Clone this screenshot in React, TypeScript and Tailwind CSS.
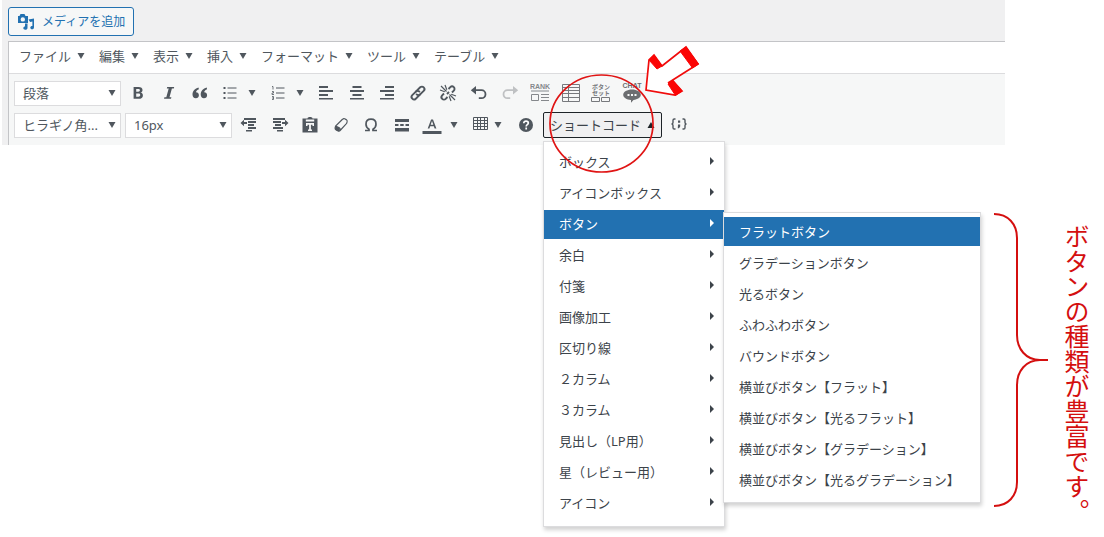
import type { ReactNode } from 'react';

const menus = ['ファイル', '編集', '表示', '挿入', 'フォーマット', 'ツール', 'テーブル'];

const shortcodes = [
  'ボックス',
  'アイコンボックス',
  'ボタン',
  '余白',
  '付箋',
  '画像加工',
  '区切り線',
  '２カラム',
  '３カラム',
  '見出し（LP用）',
  '星（レビュー用）',
  'アイコン',
];

const buttonTypes = [
  'フラットボタン',
  'グラデーションボタン',
  '光るボタン',
  'ふわふわボタン',
  'バウンドボタン',
  '横並びボタン【フラット】',
  '横並びボタン【光るフラット】',
  '横並びボタン【グラデーション】',
  '横並びボタン【光るグラデーション】',
];

function Icon({ children, className = '' }: { children: ReactNode; className?: string }) {
  return (
    <svg viewBox="0 0 20 20" className={`size-5 shrink-0 ${className}`} fill="currentColor" aria-hidden="true">
      {children}
    </svg>
  );
}

function Caret({ up = false }: { up?: boolean }) {
  return (
    <svg viewBox="0 0 8 6" className="h-1.5 w-2 shrink-0" fill="currentColor" aria-hidden="true">
      <path d={up ? 'M.5 6h7L4 0z' : 'M.5 0h7L4 6z'} />
    </svg>
  );
}

function Tool({ label, children }: { label: string; children: ReactNode }) {
  return (
    <button type="button" aria-label={label} className="flex h-7 items-center justify-center">
      {children}
    </button>
  );
}

function SplitTool({ label, className, children }: { label: string; className: string; children: ReactNode }) {
  return (
    <button type="button" aria-label={label} className={`flex h-7 items-center pl-[5px] ${className}`}>
      {children}
      <Caret />
    </button>
  );
}

function Picker({ label, value }: { label: string; value: string }) {
  return (
    <div className="relative w-[107px]">
      <select
        aria-label={label}
        className="block h-[25px] w-full appearance-none border border-[#dcdcde] bg-white pl-2 text-[13px] leading-5 text-[#50575e]"
      >
        <option>{value}</option>
      </select>
      <span className="pointer-events-none absolute inset-y-0 right-[5px] flex items-center">
        <Caret />
      </span>
    </div>
  );
}

const stroke = { fill: 'none', stroke: 'currentColor' };

function FirstRow() {
  return (
    <div className="flex h-8 items-center">
      <Picker label="段落" value="段落" />
      <div className="ml-0.5 grid w-[92px] grid-cols-3">
        <Tool label="太字">
          <Icon>
            <path d="M5.600 4h4.900c2.600 0 4 1 4 2.900 0 1.400-.7 2.300-2 2.700 1.600.3 2.400 1.300 2.400 2.800 0 2.200-1.600 3.400-4.300 3.400h-5zm2.600 2v2.700h2c1.100 0 1.700-.5 1.700-1.400S11.300 6 10.200 6zm0 4.600v3.100h2.200c1.200 0 1.800-.5 1.800-1.600s-.7-1.500-1.900-1.500z" />
          </Icon>
        </Tool>
        <Tool label="斜体">
          <Icon>
            <path d="M8.200 4h7l-.4 1.500h-1.900L10.500 14.300h1.900L12 15.800H5l.4-1.500h1.900L9.700 5.500H7.800z" />
          </Icon>
        </Tool>
        <Tool label="引用">
          <Icon>
            <path d="M8.500 4.500C5 5.300 2.500 8 2.500 11.600c0 2.300 1.300 3.700 3.300 3.700 1.800 0 3.100-1.300 3.100-3.100S7.700 9.200 6 9.200c.2-1.200 1.200-2.200 2.900-2.900zM16.700 4.500c-3.500.8-6 3.500-6 7.100 0 2.300 1.300 3.700 3.300 3.700 1.800 0 3.100-1.300 3.100-3.100s-1.200-3-2.900-3c.2-1.200 1.200-2.200 2.900-2.900z" />
          </Icon>
        </Tool>
      </div>
      <SplitTool label="番号なしリスト" className="w-12 gap-2">
        <Icon>
          <path d="M3.500 4h2v2h-2zM3.500 9h2v2h-2zM3.500 14h2v2h-2z" />
          <path d="M7.500 5h9M7.500 10h9M7.500 15h9" {...stroke} />
        </Icon>
      </SplitTool>
      <SplitTool label="番号付きリスト" className="w-12 gap-2">
        <Icon>
          <path d="M4 3.500h1v3M4 8.500h1.500v1.500H4v1.500h2M4 13.500h1.500v3H4M4 15h1.500" {...stroke} strokeWidth=".8" />
          <path d="M8 5h8.500M8 10h8.500M8 15h8.500" {...stroke} />
        </Icon>
      </SplitTool>
      <div className="grid w-[336px] grid-cols-11">
        <Tool label="左寄せ">
          <Icon><path d="M3 3h9v2H3zM3 7h14v2H3zM3 11h9v2H3zM3 15h14v1.500H3z" /></Icon>
        </Tool>
        <Tool label="中央揃え">
          <Icon><path d="M5.500 3h9v2h-9zM3 7h14v2H3zM5.500 11h9v2h-9zM3 15h14v1.500H3z" /></Icon>
        </Tool>
        <Tool label="右寄せ">
          <Icon><path d="M8 3h9v2H8zM3 7h14v2H3zM8 11h9v2H8zM3 15h14v1.500H3z" /></Icon>
        </Tool>
        <Tool label="リンクの挿入">
          <Icon>
            <g {...stroke} strokeWidth="1.900" strokeLinecap="round">
              <path d="m7.800 8.600 4.400-4.300a2.400 2.400 0 0 1 3.500 3.500l-3.600 3.600a2.400 2.400 0 0 1-3.500 0" />
              <path d="m12.200 11.400-4.400 4.300a2.400 2.400 0 0 1-3.500-3.500l3.600-3.600a2.400 2.400 0 0 1 3.500 0" />
            </g>
          </Icon>
        </Tool>
        <Tool label="リンクの削除">
          <Icon>
            <g {...stroke} strokeWidth="1.900">
              <path d="m10.500 6 1.800-1.800a2.400 2.400 0 0 1 3.500 3.500L14 9.500" />
              <path d="m9.500 14-1.800 1.800a2.400 2.400 0 0 1-3.500-3.500L6 10.500M9 11l2-2" />
            </g>
            <path d="m3 3 5.500 5.500M7 2l1.800 4.800M2 7l4.800 1.800M17 17l-5.500-5.500M13 18l-1.800-4.800M18 13l-4.800-1.800" {...stroke} strokeWidth="1.200" />
          </Icon>
        </Tool>
        <Tool label="取り消し">
          <Icon>
            <path d="M1.800 7.200 7 3v8.400z" />
            <path d="M6 7.200h6.500a4 4 0 0 1 0 8H9.800" {...stroke} strokeWidth="1.800" />
          </Icon>
        </Tool>
        <Tool label="やり直し">
          <Icon className="text-[#bfc1c3]">
            <path d="M18.200 7.200 13 3v8.400z" />
            <path d="M14 7.200H7.500a4 4 0 0 0 0 8h2.700" {...stroke} strokeWidth="1.800" />
          </Icon>
        </Tool>
        <Tool label="ランキング">
          <Icon className="text-[#85888c]">
            <text x="10" y="6" textAnchor="middle" className="font-['Liberation_Sans'] text-[7px] font-bold">RANK</text>
            <path d="M1 7.500h18v1H1z" />
            <path d="M1.500 11.500h7v6h-7zM11 11.500h8M11 14.500h8M11 17.500h8" {...stroke} />
          </Icon>
        </Tool>
        <Tool label="表">
          <Icon className="text-[#77797d]">
            <path d="M1.500 1.500h17v17h-17zM7.500 1.500v17M1.500 4.500h17M1.500 7.500h17M1.500 10.500h17M1.500 14.500h17" {...stroke} />
          </Icon>
        </Tool>
        <Tool label="ボタンセット">
          <Icon className="text-[#77797d]">
            <text x="10" y="6" textAnchor="middle" className="text-[6px] font-bold">ボタン</text>
            <text x="10" y="12" textAnchor="middle" className="text-[6px] font-bold">セット</text>
            <path d="M.5 14.500h8v4h-8zM10.500 14.500h8v4h-8z" {...stroke} />
          </Icon>
        </Tool>
        <Tool label="吹き出し">
          <Icon className="text-[#6b6d70]">
            <text x="10" y="5" textAnchor="middle" className="font-['Liberation_Sans'] text-[7px] font-bold">CHAT</text>
            <path d="M10 6.500c4.900 0 8.800 2.300 8.800 5.300 0 2.800-3.200 4.800-7.300 5.200L9 19.800V17c-4.500-.3-7.800-2.400-7.800-5.200 0-3 3.900-5.300 8.800-5.300z" />
            <path d="M5.500 11h2v2h-2zM9 11h2v2H9zM12.500 11h2v2h-2z" fill="#f6f7f7" />
          </Icon>
        </Tool>
      </div>
    </div>
  );
}

function ButtonTypeMenu() {
  return (
    <ul className="absolute top-0.5 left-[179px] z-10 flex w-[258px] flex-col gap-0.5 border border-[#dcdcde] bg-white pt-1 pb-2 text-[#3c434a] shadow-[1px_3px_4px_rgba(0,0,0,0.18)]">
      {buttonTypes.map((name, i) => (
        <li key={name}>
          <button
            type="button"
            className={`block h-[29px] w-full pl-[15px] text-left ${i === 0 ? 'bg-[#2271b1] text-white' : ''}`}
          >
            {name}
          </button>
        </li>
      ))}
    </ul>
  );
}

function ShortcodeMenu() {
  return (
    <ul className="absolute top-full left-0 mt-[3px] flex w-[182px] flex-col gap-0.5 border border-[#dcdcde] bg-white pt-1.5 pb-2 text-[13px] leading-5 text-[#3c434a] shadow-[1px_3px_4px_rgba(0,0,0,0.18)]">
      {shortcodes.map((name) => {
        const open = name === 'ボタン';
        return (
          <li key={name} className="relative">
            <button
              type="button"
              className={`flex h-[29px] w-full items-center justify-between pr-2.5 pb-px pl-[15px] ${open ? 'bg-[#2271b1] text-white' : ''}`}
            >
              {name}
              <svg viewBox="0 0 4 8" className="mb-0.5 h-2 w-1" fill="currentColor" aria-hidden="true">
                <path d="M0 0v8l4-4z" />
              </svg>
            </button>
            {open && <ButtonTypeMenu />}
          </li>
        );
      })}
    </ul>
  );
}

function SecondRow() {
  return (
    <div className="flex h-8 items-center">
      <div className="flex gap-1">
        <Picker label="フォント" value="ヒラギノ角..." />
        <Picker label="フォントサイズ" value="16px" />
      </div>
      <div className="ml-0.5 grid w-[183px] grid-cols-6">
        <Tool label="インデントを減らす">
          <Icon>
            <path d="M5 3h12v2H5zM9 6h8v2H9zM9 9h6v2H9zM9 12h8v2H9zM7 15h6v1.500H7z" />
            <path d="M1.500 8 5 4.800v2.100h3v2.200H5v2.100z" />
          </Icon>
        </Tool>
        <Tool label="インデントを増やす">
          <Icon>
            <path d="M3 3h12v2H3zM3 6h8v2H3zM5 9h6v2H5zM3 12h10v2H3zM7 15h6v1.500H7z" />
            <path d="M18.500 8 15 4.800v2.100h-3v2.200h3v2.100z" />
          </Icon>
        </Tool>
        <Tool label="テキストとしてペースト">
          <Icon>
            <path fillRule="evenodd" d="M7.500 3.500C7.500 2.500 8.500 2 10 2s2.500.5 2.500 1.500H17.500V17.500h-15V3.500zM5.800 4.500v2h8.400v-2zM6 8v3h1.500V9.800h1.600v4.700H8V16h4v-1.500h-1.100V9.800h1.600V11H14V8z" />
          </Icon>
        </Tool>
        <Tool label="書式設定をクリア">
          <Icon>
            <path d="M11.500 4.300q1-1 2.200-.5l1.500.8q1.200.7.9 2.100l-.4 1.600-6.600 7.200q-.8.900-2 .4l-2-1q-1.300-.6-1-2l.5-1.800zM4.600 11.100l3.700 1.800q1 .5.900 2.300" {...stroke} strokeWidth="1.200" />
            <path d="m4.600 11.100 4 2.200.4 2.300-1.200.6-3.200-1.500-.5-1.300z" />
          </Icon>
        </Tool>
        <Tool label="特殊文字">
          <Icon>
            <path d="M4 15.500h4v-1.300C6 13 5 11.300 5 9.200 5 6.200 7 4.200 10 4.200s5 2 5 5c0 2.100-1 3.800-3 5v1.300h4" {...stroke} strokeWidth="1.700" />
          </Icon>
        </Tool>
        <Tool label="続きを読む">
          <Icon><path d="M3 4h14v3H3zM3 9h3.500v2H3zM8.200 9h3.500v2H8.200zM13.500 9H17v2h-3.500zM3 13h14v3.500H3z" /></Icon>
        </Tool>
      </div>
      <SplitTool label="テキスト色" className="w-12 gap-2">
        <Icon className="overflow-visible">
          <path d="m5.700 13.500 3.400-9h1.900l3.400 9h-1.800l-.8-2.300H8.200l-.8 2.300zm3-3.800h2.600l-1.300-3.700z" />
          <path d="M.5 16h19v3H.5z" />
        </Icon>
      </SplitTool>
      <SplitTool label="テーブル" className="w-[46px] gap-1">
        <Icon>
          <path d="M3.500 2.500h14v12h-14zM7.500 2.500v12M10.500 2.500v12M14.500 2.500v12M3.500 5.500h14M3.500 8.500h14M3.500 11.500h14" {...stroke} />
        </Icon>
      </SplitTool>
      <div className="grid w-[30px]">
        <Tool label="ヘルプ">
          <Icon>
            <circle cx="10" cy="10" r="7" />
            <path d="M7.800 8.300c0-1.400.9-2.200 2.200-2.200s2.300.8 2.300 1.900c0 1.600-2.100 1.600-2.100 3.400M10.200 12.600v1.800" stroke="#fff" strokeWidth="1.700" fill="none" />
          </Icon>
        </Tool>
      </div>
      <div className="relative ml-0.5 w-[119px]">
        <button
          type="button"
          aria-expanded="true"
          className="flex h-[26px] w-full items-center justify-between rounded-[2px] border border-[#1d2327] bg-[#f0f0f1] px-1.5 text-[13px] leading-5 text-[#3c434a]"
        >
          ショートコード
          <span className="text-[#1d2327]"><Caret up /></span>
        </button>
        <ShortcodeMenu />
      </div>
      <div className="ml-1 grid w-[26px]">
        <Tool label="コード">
          <Icon>
            <path d="M6.500 4H5.300Q4 4 4 5.300V7.500Q4 9 2.500 9Q4 9 4 10.500v2.200Q4 14 5.300 14h1.200M13.500 4h1.200Q16 4 16 5.300V7.500Q16 9 17.500 9Q16 9 16 10.500v2.200Q16 14 14.700 14h-1.200" {...stroke} strokeWidth="1.400" />
            <path d="M9 5.500h2.200v2.200H9zM9 9.500h2.200v2L10 13.200H8.800z" />
          </Icon>
        </Tool>
      </div>
    </div>
  );
}

// red circle round the shortcode button and the arrow beside it
function Pointer() {
  return (
    <svg viewBox="540 40 170 140" className="pointer-events-none absolute top-10 left-[540px] z-20 h-[140px] w-[170px]" fill="none" stroke="#e01414" strokeWidth="1.700" aria-hidden="true">
      <ellipse cx="601.500" cy="123.500" rx="51.500" ry="48.500" />
      <path d="M646 90 649 60 654 55 662 66 686 47 698 64 668 83 673 81 682 91 675 95z" fill="#fff" stroke="#f00c0c" />
      <path d="m649 60 5-5 8 11-5 3zM680 51l6-4 12.500 17-6 4zM668 84l5-3.500 9 10.500-6.500 4.500z" fill="#fb0505" stroke="#fb0505" strokeWidth="1" />
    </svg>
  );
}

function SideNote() {
  return (
    <div className="pointer-events-none absolute top-[212px] left-[992px] flex items-start gap-3.5 text-[#d40f0f]">
      <svg viewBox="0 0 58 296" className="h-[296px] w-[58px]" fill="none" stroke="currentColor" strokeWidth="2" aria-hidden="true">
        <path d="M2 2C16 2 25 12 25 26V123C25 137 34 148 48 148H56M2 294C16 294 25 284 25 270V173C25 159 34 148 48 148" />
      </svg>
      <p className="mt-3 text-[25px] leading-6 whitespace-nowrap [writing-mode:vertical-rl]">
        ボタンの種類が豊富です。
      </p>
    </div>
  );
}

export default function App() {
  return (
    <main className="relative min-h-screen overflow-hidden bg-white font-['Noto_Sans','Noto_Sans_CJK_JP',sans-serif] text-[#50575e]">
      <div className="mr-[99px] ml-0.5 bg-[#f0f0f1] pl-1.5">
        <div className="flex h-[41px] items-start pt-[7px]">
          <button
            type="button"
            className="flex h-[29px] w-[126px] items-center gap-1.5 rounded-[3px] border border-[#2271b1] bg-[#f6f7f7] pl-[7px] text-xs leading-5 whitespace-nowrap text-[#2271b1]"
          >
            <Icon>
              <path fillRule="evenodd" d="M2 4h1.500L4.500 2h4l1 2H12v7H2zM6.800 5.200a2.200 2.200 0 1 0 0 4.400 2.200 2.200 0 0 0 0-4.400z" />
              <path d="M12.500 7.500 18 6.500v8.700c0 1.300-.8 2.100-1.900 2.100s-1.800-.6-1.800-1.500c0-1.100.8-1.700 2.100-1.700V9.500l-2.300.5zM9 11.500h2.500v4.200c0 1.300-.9 2.100-2.200 2.100-1.200 0-2-.7-2-1.700 0-1.100.8-1.700 1.700-1.700z" />
            </Icon>
            メディアを追加
          </button>
        </div>
        <div className="border-t border-l border-[#c3c4c7] bg-[#f6f7f7]">
          <nav className="flex h-8 items-center gap-3.5 border-b border-[#dcdcde] bg-white pb-1 pl-2.5">
            {menus.map((name) => (
              <button key={name} type="button" className="flex items-center gap-1.5 text-[13px] leading-5">
                {name}
                <Caret />
              </button>
            ))}
          </nav>
          <div className="pt-[3px] pb-1 pl-[5px]">
            <FirstRow />
            <SecondRow />
          </div>
        </div>
      </div>
      <Pointer />
      <SideNote />
    </main>
  );
}
